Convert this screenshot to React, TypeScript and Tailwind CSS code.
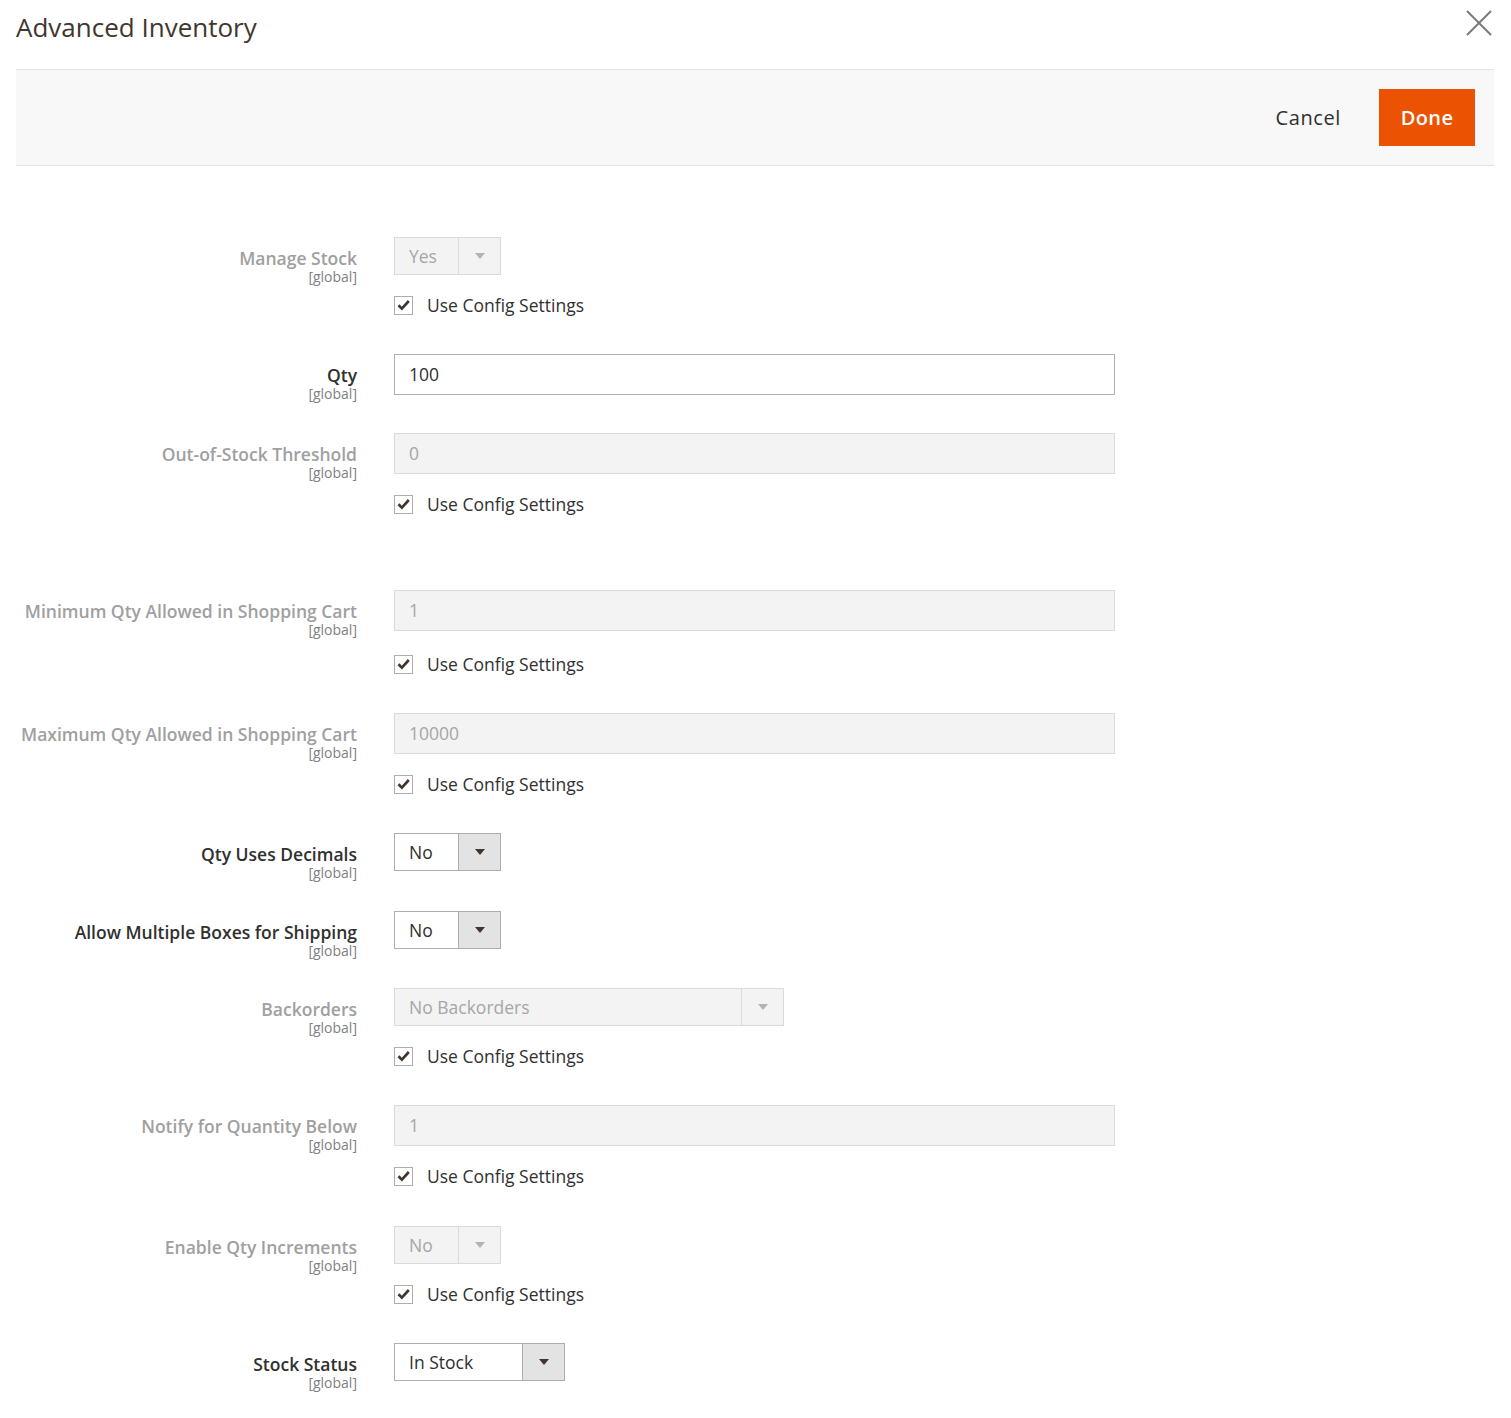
import type { ReactNode } from 'react'

// ---------------------------------------------------------------------------
// Small pieces
// ---------------------------------------------------------------------------

function CloseIcon() {
  return (
    <svg className="h-[26px] w-[26px] text-[#7a7a7a]" viewBox="0 0 26 26" fill="none" stroke="currentColor" strokeWidth={2} aria-hidden="true">
      <line x1="1" y1="1" x2="25" y2="25" />
      <line x1="25" y1="1" x2="1" y2="25" />
    </svg>
  )
}

function Arrow({ disabled }: { disabled?: boolean }) {
  return (
    <svg className={disabled ? 'h-[6px] w-[10px] text-[#b3b3b3]' : 'h-[6px] w-[10px] text-[#41362f]'} viewBox="0 0 10 6" fill="currentColor" aria-hidden="true">
      <path d="M0 0h10L5 6z" />
    </svg>
  )
}

function ConfigCheckbox() {
  return (
    <label className="mt-[20px] flex h-[20px] items-center gap-[14px]">
      <span className="flex h-[19px] w-[19px] items-center justify-center border border-[#adadad] bg-white">
        <svg className="h-[12px] w-[13px] text-[#41362f]" viewBox="0 0 13 12" fill="none" stroke="currentColor" strokeWidth={2.7} aria-hidden="true">
          <path d="M1.5 6.2l3.4 3.4L11.8 2" />
        </svg>
      </span>
      <span className="text-[17.5px] text-[#303030]">Use Config Settings</span>
    </label>
  )
}

function TextInput({ value, disabled }: { value: string; disabled?: boolean }) {
  return (
    <div
      className={
        disabled
          ? 'flex h-[41px] w-[721px] items-center border border-[#dadada] bg-[#f3f3f3] px-[14px] text-[17.5px] text-[#a6a6a6]'
          : 'flex h-[41px] w-[721px] items-center border border-[#adadad] bg-white px-[14px] text-[17.5px] text-[#303030]'
      }
    >
      {value}
    </div>
  )
}

function Select({ value, width, disabled }: { value: string; width: string; disabled?: boolean }) {
  return (
    <div
      className={`flex h-[38px] ${width} border ${disabled ? 'border-[#dadada] bg-[#f3f3f3] text-[#a6a6a6]' : 'border-[#adadad] bg-white text-[#303030]'}`}
    >
      <div className="flex flex-1 items-center px-[14px] text-[17.5px]">{value}</div>
      <div
        className={`flex w-[42px] items-center justify-center border-l ${disabled ? 'border-[#dadada] bg-[#f3f3f3]' : 'border-[#adadad] bg-[#e3e3e3]'}`}
      >
        <Arrow disabled={disabled} />
      </div>
    </div>
  )
}

function Field({
  label,
  muted,
  className,
  children,
}: {
  label: string
  muted?: boolean
  className: string
  children: ReactNode
}) {
  return (
    <div className={`flex items-start gap-[37px] ${className}`}>
      {/* label block is allowed to hang below the control */}
      <div className="mb-[-12px] flex w-[341px] flex-col items-end pt-[10px] text-right">
        <span className={`text-[17.5px] font-semibold leading-[22px] ${muted ? 'text-[#a0a0a0]' : 'text-[#303030]'}`}>{label}</span>
        <span className="text-[14px] leading-[16px] text-[#808080]">[global]</span>
      </div>
      <div className="flex flex-col">{children}</div>
    </div>
  )
}

// ---------------------------------------------------------------------------
// Page
// ---------------------------------------------------------------------------

export default function App() {
  return (
    <div className="min-h-[1418px] bg-white px-[16px] pr-[17px] font-['Open_Sans',_'Noto_Sans',_sans-serif] text-[#303030]">
      {/* Header */}
      <div className="flex h-[69px] items-start justify-between">
        <h1 className="pt-[9px] text-[26px] leading-[36px] font-normal text-[#41362f]">Advanced Inventory</h1>
        <button type="button" className="mt-[10px] mr-[2px]" aria-label="Close">
          <CloseIcon />
        </button>
      </div>

      {/* Action bar */}
      <div className="flex h-[97px] items-center justify-end gap-[38px] border-y border-[#e3e3e3] bg-[#f8f8f8] pr-[19px]">
        <button type="button" className="text-[20px] tracking-[0.03em] text-[#303030]">
          Cancel
        </button>
        <button type="button" className="h-[57px] w-[96px] bg-[#eb5202] text-[20px] font-semibold tracking-[0.02em] text-white">
          Done
        </button>
      </div>

      {/* Form */}
      <div className="flex flex-col pt-[71px] pb-[37px]">
        <Field label="Manage Stock" muted className="">
          <Select value="Yes" width="w-[107px]" disabled />
          <ConfigCheckbox />
        </Field>

        <Field label="Qty" className="mt-[39px]">
          <TextInput value="100" />
        </Field>

        <Field label="Out-of-Stock Threshold" muted className="mt-[38px]">
          <TextInput value="0" disabled />
          <ConfigCheckbox />
        </Field>

        <Field label="Minimum Qty Allowed in Shopping Cart" muted className="mt-[76px]">
          <TextInput value="1" disabled />
          <div className="pt-[3px]">
            <ConfigCheckbox />
          </div>
        </Field>

        <Field label="Maximum Qty Allowed in Shopping Cart" muted className="mt-[39px]">
          <TextInput value="10000" disabled />
          <ConfigCheckbox />
        </Field>

        <Field label="Qty Uses Decimals" className="mt-[39px]">
          <Select value="No" width="w-[107px]" />
        </Field>

        <Field label="Allow Multiple Boxes for Shipping" className="mt-[40px]">
          <Select value="No" width="w-[107px]" />
        </Field>

        <Field label="Backorders" muted className="mt-[39px]">
          <Select value="No Backorders" width="w-[390px]" disabled />
          <ConfigCheckbox />
        </Field>

        <Field label="Notify for Quantity Below" muted className="mt-[39px]">
          <TextInput value="1" disabled />
          <ConfigCheckbox />
        </Field>

        <Field label="Enable Qty Increments" muted className="mt-[40px]">
          <Select value="No" width="w-[107px]" disabled />
          <ConfigCheckbox />
        </Field>

        <Field label="Stock Status" className="mt-[39px]">
          <Select value="In Stock" width="w-[171px]" />
        </Field>
      </div>
    </div>
  )
}
